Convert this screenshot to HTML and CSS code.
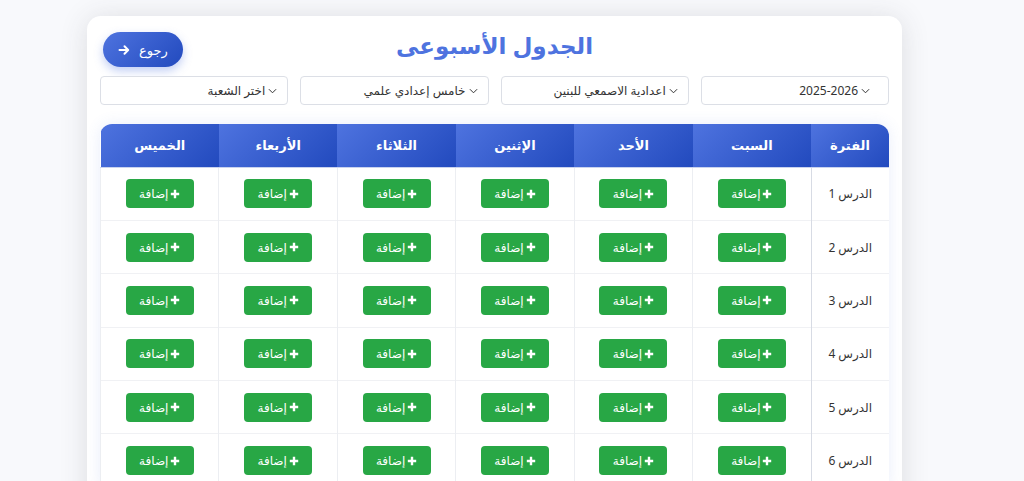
FILE: index.html
```html
<!DOCTYPE html>
<html lang="ar" dir="rtl">
<head>
<meta charset="utf-8">
<title>الجدول الأسبوعى</title>
<link rel="stylesheet" href="styles.css">
</head>
<body>
<div class="card">
  <div class="top">
    <h1 class="title">الجدول الأسبوعى</h1>
    <a class="back" href="#">رجوع
      <svg class="arrow" viewBox="0 0 12 12" width="12" height="12"><path d="M1.5 6H10M6.5 2.3L10.2 6L6.5 9.7" fill="none" stroke="#fff" stroke-width="2" stroke-linecap="round" stroke-linejoin="round"/></svg>
    </a>
  </div>
  <div class="filters">
    <div class="sel sel-num"><span class="ltr">2025-2026</span><svg class="chev" viewBox="0 0 10 6" width="9" height="6"><path d="M1 1l4 4 4-4" fill="none" stroke="#333" stroke-width="1.1"/></svg></div>
    <div class="sel"><span>اعدادية الاصمعي للبنين</span><svg class="chev" viewBox="0 0 10 6" width="9" height="6"><path d="M1 1l4 4 4-4" fill="none" stroke="#333" stroke-width="1.1"/></svg></div>
    <div class="sel"><span>خامس إعدادي علمي</span><svg class="chev" viewBox="0 0 10 6" width="9" height="6"><path d="M1 1l4 4 4-4" fill="none" stroke="#333" stroke-width="1.1"/></svg></div>
    <div class="sel"><span>اختر الشعبة</span><svg class="chev" viewBox="0 0 10 6" width="9" height="6"><path d="M1 1l4 4 4-4" fill="none" stroke="#333" stroke-width="1.1"/></svg></div>
  </div>
  <div class="table-wrap">
    <table class="sched">
      <thead>
        <tr>
          <th class="period">الفترة</th>
          <th>السبت</th>
          <th>الأحد</th>
          <th>الإثنين</th>
          <th>الثلاثاء</th>
          <th>الأربعاء</th>
          <th>الخميس</th>
        </tr>
      </thead>
      <tbody id="rows"></tbody>
    </table>
  </div>
</div>
<script src="app.js"></script>
</body>
</html>
```

FILE: app.js
```js
var body = document.getElementById('rows');
var btn = '<button class="add"><svg class="plus" viewBox="0 0 10 10" width="10" height="10"><path d="M5 0.8V9.2M0.8 5H9.2" stroke="#fff" stroke-width="2.4"/></svg>إضافة</button>';
for (var i = 1; i <= 6; i++) {
  var html = '<tr><td class="period">الدرس ' + i + '</td>';
  for (var d = 0; d < 6; d++) html += '<td>' + btn + '</td>';
  html += '</tr>';
  body.insertAdjacentHTML('beforeend', html);
}
```

FILE: styles.css
```css
* { box-sizing: border-box; }
html, body { margin: 0; padding: 0; }
body {
  background: #f8f9fc;
  font-family: "Noto Sans", "DejaVu Sans", sans-serif;
  color: #333;
  overflow: hidden;
}
.card {
  width: 815px;
  margin: 16px 122px 0 0;
  background: #fff;
  border-radius: 14px;
  box-shadow: 0 0.15rem 1.75rem 0 rgba(58, 59, 69, 0.15);
  padding: 16px 13px 40px;
}
.top {
  display: grid;
  grid-template-columns: 1fr auto 1fr;
  align-items: start;
  height: 35px;
}
.title {
  grid-column: 2;
  margin: 0;
  font-size: 23px;
  font-weight: 700;
  color: #4e73df;
  line-height: 26px;
}
.back {
  grid-column: 3;
  justify-self: end;
  margin-left: 3px;
  width: 80px;
  height: 35px;
  border-radius: 18px;
  background: linear-gradient(135deg, #4e73df, #224abe);
  box-shadow: 0 4px 10px rgba(78, 115, 223, 0.35);
  color: #fff;
  text-decoration: none;
  font-size: 13px;
  display: flex;
  align-items: center;
  justify-content: center;
  gap: 9px;
}
.filters {
  display: grid;
  grid-template-columns: repeat(4, 1fr);
  gap: 12px;
  margin-top: 9px;
}
.sel {
  height: 29px;
  border: 1px solid #dcdfe6;
  border-radius: 4px;
  background: #fff;
  display: flex;
  flex-direction: row-reverse;
  justify-content: flex-end;
  align-items: center;
  gap: 3px;
  padding: 0 10px;
  font-size: 12px;
  color: #333;
}
.sel-num { padding-right: 18px; }
.ltr { direction: ltr; }
.chev { flex: none; }
.table-wrap {
  margin-top: 19px;
  border-radius: 12px 12px 0 0;
  overflow: hidden;
  box-shadow: 0 0 15px rgba(78, 115, 223, 0.12);
}
.sched {
  width: 100%;
  border-collapse: collapse;
  table-layout: fixed;
}
.sched th {
  height: 43px;
  background: linear-gradient(135deg, #4e73df, #224abe);
  color: #fff;
  font-size: 13px;
  font-weight: 700;
  text-align: center;
  border-bottom: 1px solid #c9d3ee;
  padding: 0;
}
.sched th.period { width: 78px; }
.sched td {
  height: 53.4px;
  text-align: center;
  border-top: 1px solid #f0f1f4;
  border-left: 1px solid #eceef2;
  padding: 0;
  font-size: 12px;
  color: #333;
}
.sched td.period { border-left: 1px solid #d7dbe4; }
.add {
  width: 68px;
  height: 29px;
  border: none;
  border-radius: 4px;
  background: #28a745;
  color: #fff;
  font-family: inherit;
  font-size: 12px;
  display: inline-flex;
  align-items: center;
  justify-content: center;
  gap: 2px;
  padding: 0;
  vertical-align: middle;
}
.plus { flex: none; }
```
